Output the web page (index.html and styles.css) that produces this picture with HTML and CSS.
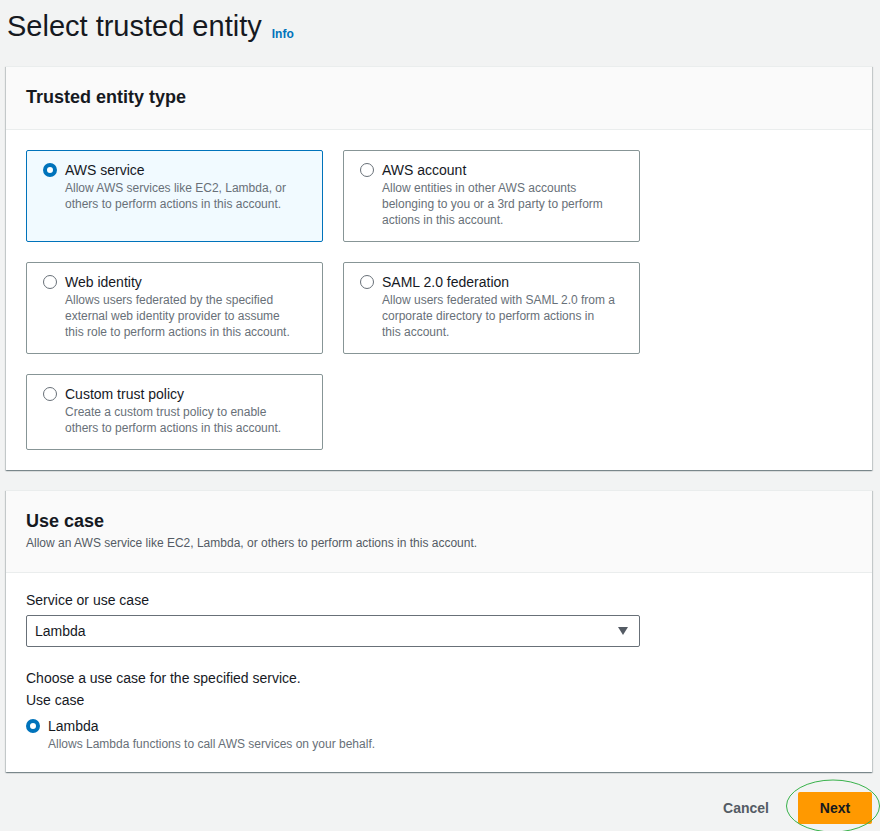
FILE: index.html
```html
<!DOCTYPE html>
<html lang="en">
<head>
<meta charset="utf-8">
<title>Select trusted entity</title>
<link rel="stylesheet" href="styles.css">
</head>
<body>
<div class="page">
  <h1 class="title">Select trusted entity <a class="info" href="#">Info</a></h1>

  <section class="panel">
    <header class="panel-head">
      <h2 class="panel-title">Trusted entity type</h2>
    </header>
    <div class="panel-body">
      <div class="tiles">
        <div class="tile selected">
          <span class="radio on"></span>
          <div class="tile-text">
            <div class="tile-title">AWS service</div>
            <div class="tile-desc">Allow AWS services like EC2, Lambda, or<br>others to perform actions in this account.</div>
          </div>
        </div>
        <div class="tile">
          <span class="radio"></span>
          <div class="tile-text">
            <div class="tile-title">AWS account</div>
            <div class="tile-desc">Allow entities in other AWS accounts<br>belonging to you or a 3rd party to perform<br>actions in this account.</div>
          </div>
        </div>
        <div class="tile">
          <span class="radio"></span>
          <div class="tile-text">
            <div class="tile-title">Web identity</div>
            <div class="tile-desc">Allows users federated by the specified<br>external web identity provider to assume<br>this role to perform actions in this account.</div>
          </div>
        </div>
        <div class="tile">
          <span class="radio"></span>
          <div class="tile-text">
            <div class="tile-title">SAML 2.0 federation</div>
            <div class="tile-desc">Allow users federated with SAML 2.0 from a<br>corporate directory to perform actions in<br>this account.</div>
          </div>
        </div>
        <div class="tile">
          <span class="radio"></span>
          <div class="tile-text">
            <div class="tile-title">Custom trust policy</div>
            <div class="tile-desc">Create a custom trust policy to enable<br>others to perform actions in this account.</div>
          </div>
        </div>
      </div>
    </div>
  </section>

  <section class="panel">
    <header class="panel-head">
      <h2 class="panel-title">Use case</h2>
      <p class="panel-desc">Allow an AWS service like EC2, Lambda, or others to perform actions in this account.</p>
    </header>
    <div class="panel-body usecase">
      <div class="field-label">Service or use case</div>
      <div class="select">
        <span>Lambda</span>
        <svg class="caret" width="10" height="8" viewBox="0 0 10 8"><path d="M0 0 H10 L5 8 Z" fill="#545b64"/></svg>
      </div>
      <div class="hint">Choose a use case for the specified service.</div>
      <div class="field-label small-gap">Use case</div>
      <div class="option">
        <span class="radio on"></span>
        <div>
          <div class="option-title">Lambda</div>
          <div class="tile-desc">Allows Lambda functions to call AWS services on your behalf.</div>
        </div>
      </div>
    </div>
  </section>

  <div class="actions">
    <button class="btn-link" type="button">Cancel</button>
    <button class="btn-primary" type="button">Next</button>
  </div>
</div>
<svg class="annot" width="100" height="56" viewBox="0 0 100 56"><ellipse cx="47" cy="27" rx="46.5" ry="26" fill="none" stroke="#38b24a" stroke-width="1"/></svg>
</body>
</html>
```

FILE: styles.css
```css
html, body {
  margin: 0;
  padding: 0;
  background: #f2f3f3;
  font-family: "Liberation Sans", Arial, sans-serif;
  color: #16191f;
}

.page {
  padding: 8px 8px 0 6px;
}

.title {
  margin: 0 0 22px 1px;
  font-size: 29px;
  line-height: 36px;
  height: 36px;
  font-weight: 400;
  color: #16191f;
}

.info {
  font-size: 12px;
  line-height: 1;
  font-weight: 700;
  color: #0073bb;
  text-decoration: none;
  margin-left: 2px;
  vertical-align: -2px;
}

.panel {
  background: #fff;
  box-shadow: 0 1px 1px 0 rgba(0, 28, 36, 0.3), 1px 1px 1px 0 rgba(0, 28, 36, 0.15), -1px 1px 1px 0 rgba(0, 28, 36, 0.15);
  border-top: 1px solid #eaeded;
  margin-bottom: 20px;
}

.panel-head {
  background: #fafafa;
  border-bottom: 1px solid #eaeded;
  padding: 19px 20px 21px;
}

.panel-title {
  margin: 0;
  font-size: 18px;
  line-height: 22px;
  font-weight: 700;
}

.panel-desc {
  margin: 3px 0 0;
  font-size: 12px;
  line-height: 16px;
  color: #545b64;
}

.panel-body {
  padding: 20px 20px 20px;
}

.tiles {
  display: grid;
  grid-template-columns: 297px 297px;
  column-gap: 20px;
  row-gap: 20px;
}

.tile {
  display: flex;
  align-items: flex-start;
  gap: 8px;
  border: 1px solid #879596;
  border-radius: 2px;
  padding: 9px 16px 13px 16px;
  background: #fff;
}

.tile.selected {
  background: #f1faff;
  border-color: #0073bb;
}

.radio {
  flex: none;
  box-sizing: border-box;
  width: 14px;
  height: 14px;
  margin-top: 3px;
  border-radius: 50%;
  border: 1px solid #687078;
  background: #fff;
}

.radio.on {
  border: 4px solid #0073bb;
}

.tile-title {
  font-size: 14px;
  line-height: 20px;
}

.tile-desc {
  font-size: 12px;
  line-height: 16px;
  color: #687078;
}

.usecase {
  padding-top: 17px;
}

.field-label {
  font-size: 14px;
  line-height: 20px;
}

.select {
  margin-top: 5px;
  width: 614px;
  box-sizing: border-box;
  height: 32px;
  border: 1px solid #687078;
  border-radius: 2px;
  display: flex;
  align-items: center;
  justify-content: space-between;
  padding: 0 11px 0 8px;
  font-size: 14px;
}

.hint {
  margin-top: 21px;
  font-size: 14px;
  line-height: 20px;
}

.small-gap {
  margin-top: 2px;
}

.option {
  margin-top: 6px;
  display: flex;
  align-items: flex-start;
  gap: 8px;
}

.option-title {
  font-size: 14px;
  line-height: 20px;
}

.actions {
  display: flex;
  justify-content: flex-end;
  align-items: center;
  gap: 29px;
  margin-top: 3px;
  padding-right: 0;
}

.btn-link {
  border: none;
  background: none;
  padding: 0;
  font-family: inherit;
  font-size: 14px;
  font-weight: 700;
  color: #545b64;
}

.btn-primary {
  border: none;
  background: #ff9900;
  border-radius: 2px;
  width: 74px;
  height: 32px;
  font-family: inherit;
  font-size: 14px;
  font-weight: 700;
  color: #16191f;
}

.annot {
  position: absolute;
  left: 786px;
  top: 779px;
  overflow: visible;
}
```
